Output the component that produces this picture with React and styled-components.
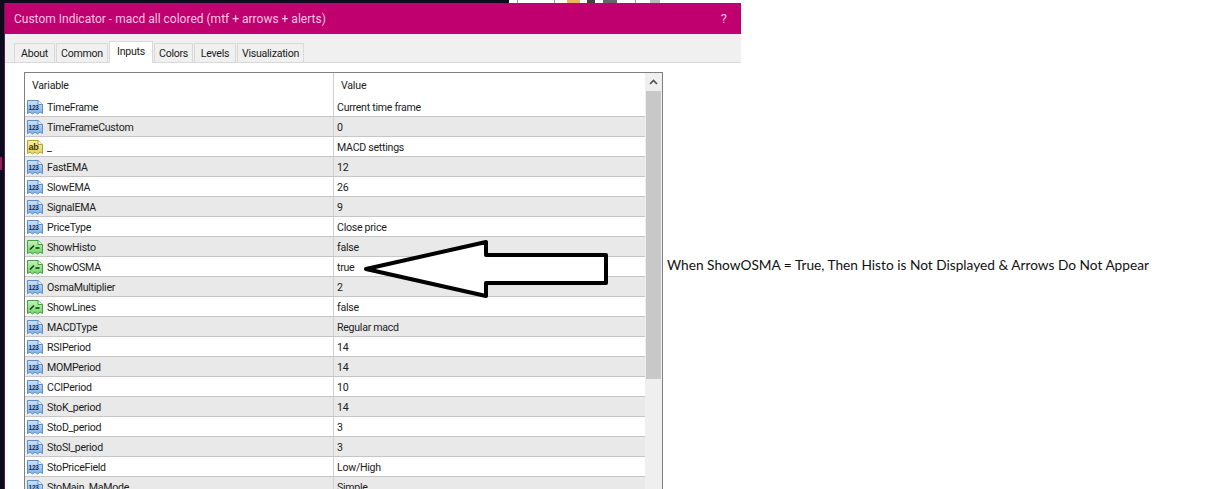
import React from 'react';
import styled, { createGlobalStyle } from 'styled-components';

const GlobalStyle = createGlobalStyle`
  html, body {
    margin: 0;
    padding: 0;
    width: 1207px;
    height: 489px;
    overflow: hidden;
    background: #ffffff;
  }
`;

const Page = styled.div`
  width: 1207px;
  height: 489px;
  overflow: hidden;
  display: flex;
  flex-direction: column;
  font-family: "Roboto", "Noto Sans", sans-serif;
`;

const TopStrip = styled.div`
  height: 3px;
  flex: none;
  display: flex;
  background: #ffffff;
`;

const DarkRun = styled.div`
  width: 509px;
  background: #0e0c1c;
`;

const StripBit = styled.div`
  width: ${(p) => p.w}px;
  margin-left: ${(p) => p.gap}px;
  background: ${(p) => p.color};
`;

const Desktop = styled.div`
  flex: 1;
  min-height: 0;
  display: flex;
`;

const LeftEdge = styled.div`
  width: 5px;
  flex: none;
  background: #0d0b1b;
  border-right: 1px solid #5c1a4c;
  box-sizing: border-box;
`;

const EdgeMark = styled.div`
  width: 2px;
  height: 13px;
  margin-top: 154px;
  background: #a01660;
`;

const Dialog = styled.div`
  flex: 1;
  min-width: 0;
  display: flex;
  flex-direction: column;
  background: #ffffff;
`;

const TitleBar = styled.div`
  width: 736px;
  height: 31px;
  flex: none;
  box-sizing: border-box;
  padding: 0 14px 0 9px;
  display: flex;
  align-items: center;
  justify-content: space-between;
  background: #c0006f;
  color: #f8c4e2;
  font-size: 12px;
`;

const HelpMark = styled.span`
  font-size: 13px;
  margin-top: -1px;
`;

const TabStrip = styled.div`
  width: 736px;
  height: 29px;
  flex: none;
  box-sizing: border-box;
  display: flex;
  align-items: flex-end;
  padding-left: 9px;
  gap: 1px;
  background: #f0f0f0;
  border-bottom: 1px solid #d9d9d9;
`;

const Tab = styled.div`
  width: ${(p) => p.w}px;
  height: ${(p) => (p.active ? 22 : 19)}px;
  box-sizing: border-box;
  display: flex;
  justify-content: center;
  align-items: center;
  padding-bottom: ${(p) => (p.active ? 3 : 0)}px;
  font-size: 10.6px;
  letter-spacing: -0.27px;
  color: #1a1a1a;
  background: ${(p) => (p.active ? '#ffffff' : '#f0f0f0')};
  border: 1px solid #d9d9d9;
  border-bottom: none;
  margin-bottom: ${(p) => (p.active ? -1 : 0)}px;
  position: relative;
`;

const Content = styled.div`
  flex: 1;
  min-height: 0;
  display: flex;
  align-items: flex-start;
  padding: 9px 0 0 19px;
`;

const GridFrame = styled.div`
  position: relative;
  width: 639px;
  flex: none;
  box-sizing: border-box;
  display: flex;
  border: 1px solid #808080;
  border-bottom: none;
  height: 460px;
`;

const GridBody = styled.div`
  flex: 1;
  min-width: 0;
`;

const HeaderRow = styled.div`
  height: 24px;
  display: grid;
  grid-template-columns: 309px 1fr;
  font-size: 10.6px;
  letter-spacing: -0.2px;
  color: #222222;
`;

const HeaderCell = styled.div`
  display: flex;
  align-items: center;
  padding-left: ${(p) => p.pad}px;
  border-right: ${(p) => (p.first ? '1px solid #d0d0d0' : 'none')};
`;

const Row = styled.div`
  height: 20px;
  box-sizing: border-box;
  display: grid;
  grid-template-columns: 309px 1fr;
  font-size: 10.6px;
  letter-spacing: -0.27px;
  color: #1c1c1c;
  background: ${(p) => (p.shaded ? '#e9e9e9' : '#ffffff')};
  border-bottom: 1px solid #c6c6c6;
`;

const NameCell = styled.div`
  display: flex;
  align-items: center;
  gap: 4px;
  padding: 1px 0 0 2px;
  border-right: 1px solid #d0d0d0;
  white-space: nowrap;
`;

const ValueCell = styled.div`
  display: flex;
  align-items: center;
  padding: 1px 0 0 3px;
  white-space: nowrap;
`;

const ScrollBar = styled.div`
  width: 17px;
  flex: none;
  box-sizing: border-box;
  display: flex;
  flex-direction: column;
  background: #efefef;
  padding: 0 1px;
`;

const ScrollButton = styled.div`
  height: 18px;
  display: flex;
  align-items: center;
  justify-content: center;
`;

const ScrollThumb = styled.div`
  height: 288px;
  background: #c8c8c8;
`;

const ArrowOverlay = styled.svg`
  position: absolute;
  left: 0;
  top: 0;
  width: 639px;
  height: 240px;
  pointer-events: none;
`;

const Note = styled.div`
  margin: 184px 0 0 4px;
  font-family: "Lato", "Open Sans", sans-serif;
  font-size: 13.7px;
  color: #111111;
  white-space: nowrap;
`;

const palettes = {
  num: { top: '#cfe3f7', bottom: '#7fb0e3', edge: '#5a8fc9', ink: '#0e2c60' },
  str: { top: '#f8f0a8', bottom: '#e6d25f', edge: '#b3a235', ink: '#3d3606' },
  bool: { top: '#c4f2bc', bottom: '#72d268', edge: '#43a33e', ink: '#0a3f0f' },
};

// small document glyph with folded corner and torn lower edge
function TypeIcon({ kind }) {
  const c = palettes[kind];
  return (
    <svg width="16" height="16" viewBox="0 0 16 16" style={{ flex: 'none' }}>
      <defs>
        <linearGradient id={`icon-${kind}`} x1="0" y1="0" x2="0" y2="1">
          <stop offset="0" stopColor={c.top} />
          <stop offset="1" stopColor={c.bottom} />
        </linearGradient>
      </defs>
      <path
        d="M0.5 1.5H11L15.5 5.5V14.5L13 13L10.5 15L8 13L5.5 15L3 13L0.5 14.5Z"
        fill={`url(#icon-${kind})`}
        stroke={c.edge}
      />
      <path d="M11 1.5V5.5H15.5" fill="#f4f8fc" stroke={c.edge} />
      {kind === 'bool' ? (
        <path d="M3 10.5L7 6.5M8.5 9H12.5" stroke={c.ink} strokeWidth="1.5" fill="none" />
      ) : kind === 'str' ? (
        <text x="1.6" y="10.5" fontSize="9" fontWeight="700" fontFamily="Liberation Sans" fill={c.ink}>ab</text>
      ) : (
        <text x="1.6" y="11" fontSize="6.4" fontWeight="700" fontFamily="Liberation Sans" fill={c.ink}>123</text>
      )}
    </svg>
  );
}

const tabs = [
  { label: 'About', w: 41 },
  { label: 'Common', w: 52 },
  { label: 'Inputs', w: 44, active: true },
  { label: 'Colors', w: 39 },
  { label: 'Levels', w: 42 },
  { label: 'Visualization', w: 67 },
];

const rows = [
  ['num', 'TimeFrame', 'Current time frame'],
  ['num', 'TimeFrameCustom', '0'],
  ['str', '_', 'MACD settings'],
  ['num', 'FastEMA', '12'],
  ['num', 'SlowEMA', '26'],
  ['num', 'SignalEMA', '9'],
  ['num', 'PriceType', 'Close price'],
  ['bool', 'ShowHisto', 'false'],
  ['bool', 'ShowOSMA', 'true'],
  ['num', 'OsmaMultiplier', '2'],
  ['bool', 'ShowLines', 'false'],
  ['num', 'MACDType', 'Regular macd'],
  ['num', 'RSIPeriod', '14'],
  ['num', 'MOMPeriod', '14'],
  ['num', 'CCIPeriod', '10'],
  ['num', 'StoK_period', '14'],
  ['num', 'StoD_period', '3'],
  ['num', 'StoSl_period', '3'],
  ['num', 'StoPriceField', 'Low/High'],
  ['num', 'StoMain_MaMode', 'Simple'],
];

export default function App() {
  return (
    <Page>
      <GlobalStyle />
      <TopStrip>
        <DarkRun />
        <StripBit w={1} gap={8} color="#9a9a9a" />
        <StripBit w={1} gap={36} color="#9a9a9a" />
        <StripBit w={13} gap={12} color="#e8b860" />
        <StripBit w={8} gap={7} color="#444444" />
        <StripBit w={14} gap={8} color="#666666" />
        <StripBit w={1} gap={18} color="#9a9a9a" />
        <StripBit w={10} gap={14} color="#bbbbbb" />
      </TopStrip>
      <Desktop>
        <LeftEdge>
          <EdgeMark />
        </LeftEdge>
        <Dialog>
          <TitleBar>
            <span>Custom Indicator - macd all colored (mtf + arrows + alerts)</span>
            <HelpMark>?</HelpMark>
          </TitleBar>
          <TabStrip>
            {tabs.map((t) => (
              <Tab key={t.label} w={t.w} active={t.active}>
                {t.label}
              </Tab>
            ))}
          </TabStrip>
          <Content>
            <GridFrame>
              <GridBody>
                <HeaderRow>
                  <HeaderCell first pad={7}>Variable</HeaderCell>
                  <HeaderCell pad={7}>Value</HeaderCell>
                </HeaderRow>
                {rows.map(([kind, name, value], i) => (
                  <Row key={name} shaded={i % 2 === 1}>
                    <NameCell>
                      <TypeIcon kind={kind} />
                      {name}
                    </NameCell>
                    <ValueCell>{value}</ValueCell>
                  </Row>
                ))}
              </GridBody>
              <ScrollBar>
                <ScrollButton>
                  <svg width="9" height="6" viewBox="0 0 9 6">
                    <path d="M1 5L4.5 1.5L8 5" fill="none" stroke="#505050" strokeWidth="1.6" />
                  </svg>
                </ScrollButton>
                <ScrollThumb />
              </ScrollBar>
              <ArrowOverlay viewBox="0 0 639 240">
                <path
                  d="M341 196L461 169V182H581V210H461V223Z"
                  fill="#ffffff"
                  stroke="#000000"
                  strokeWidth="4"
                  strokeLinejoin="round"
                />
              </ArrowOverlay>
            </GridFrame>
            <Note>When ShowOSMA = True, Then Histo is Not Displayed &amp; Arrows Do Not Appear</Note>
          </Content>
        </Dialog>
      </Desktop>
    </Page>
  );
}
